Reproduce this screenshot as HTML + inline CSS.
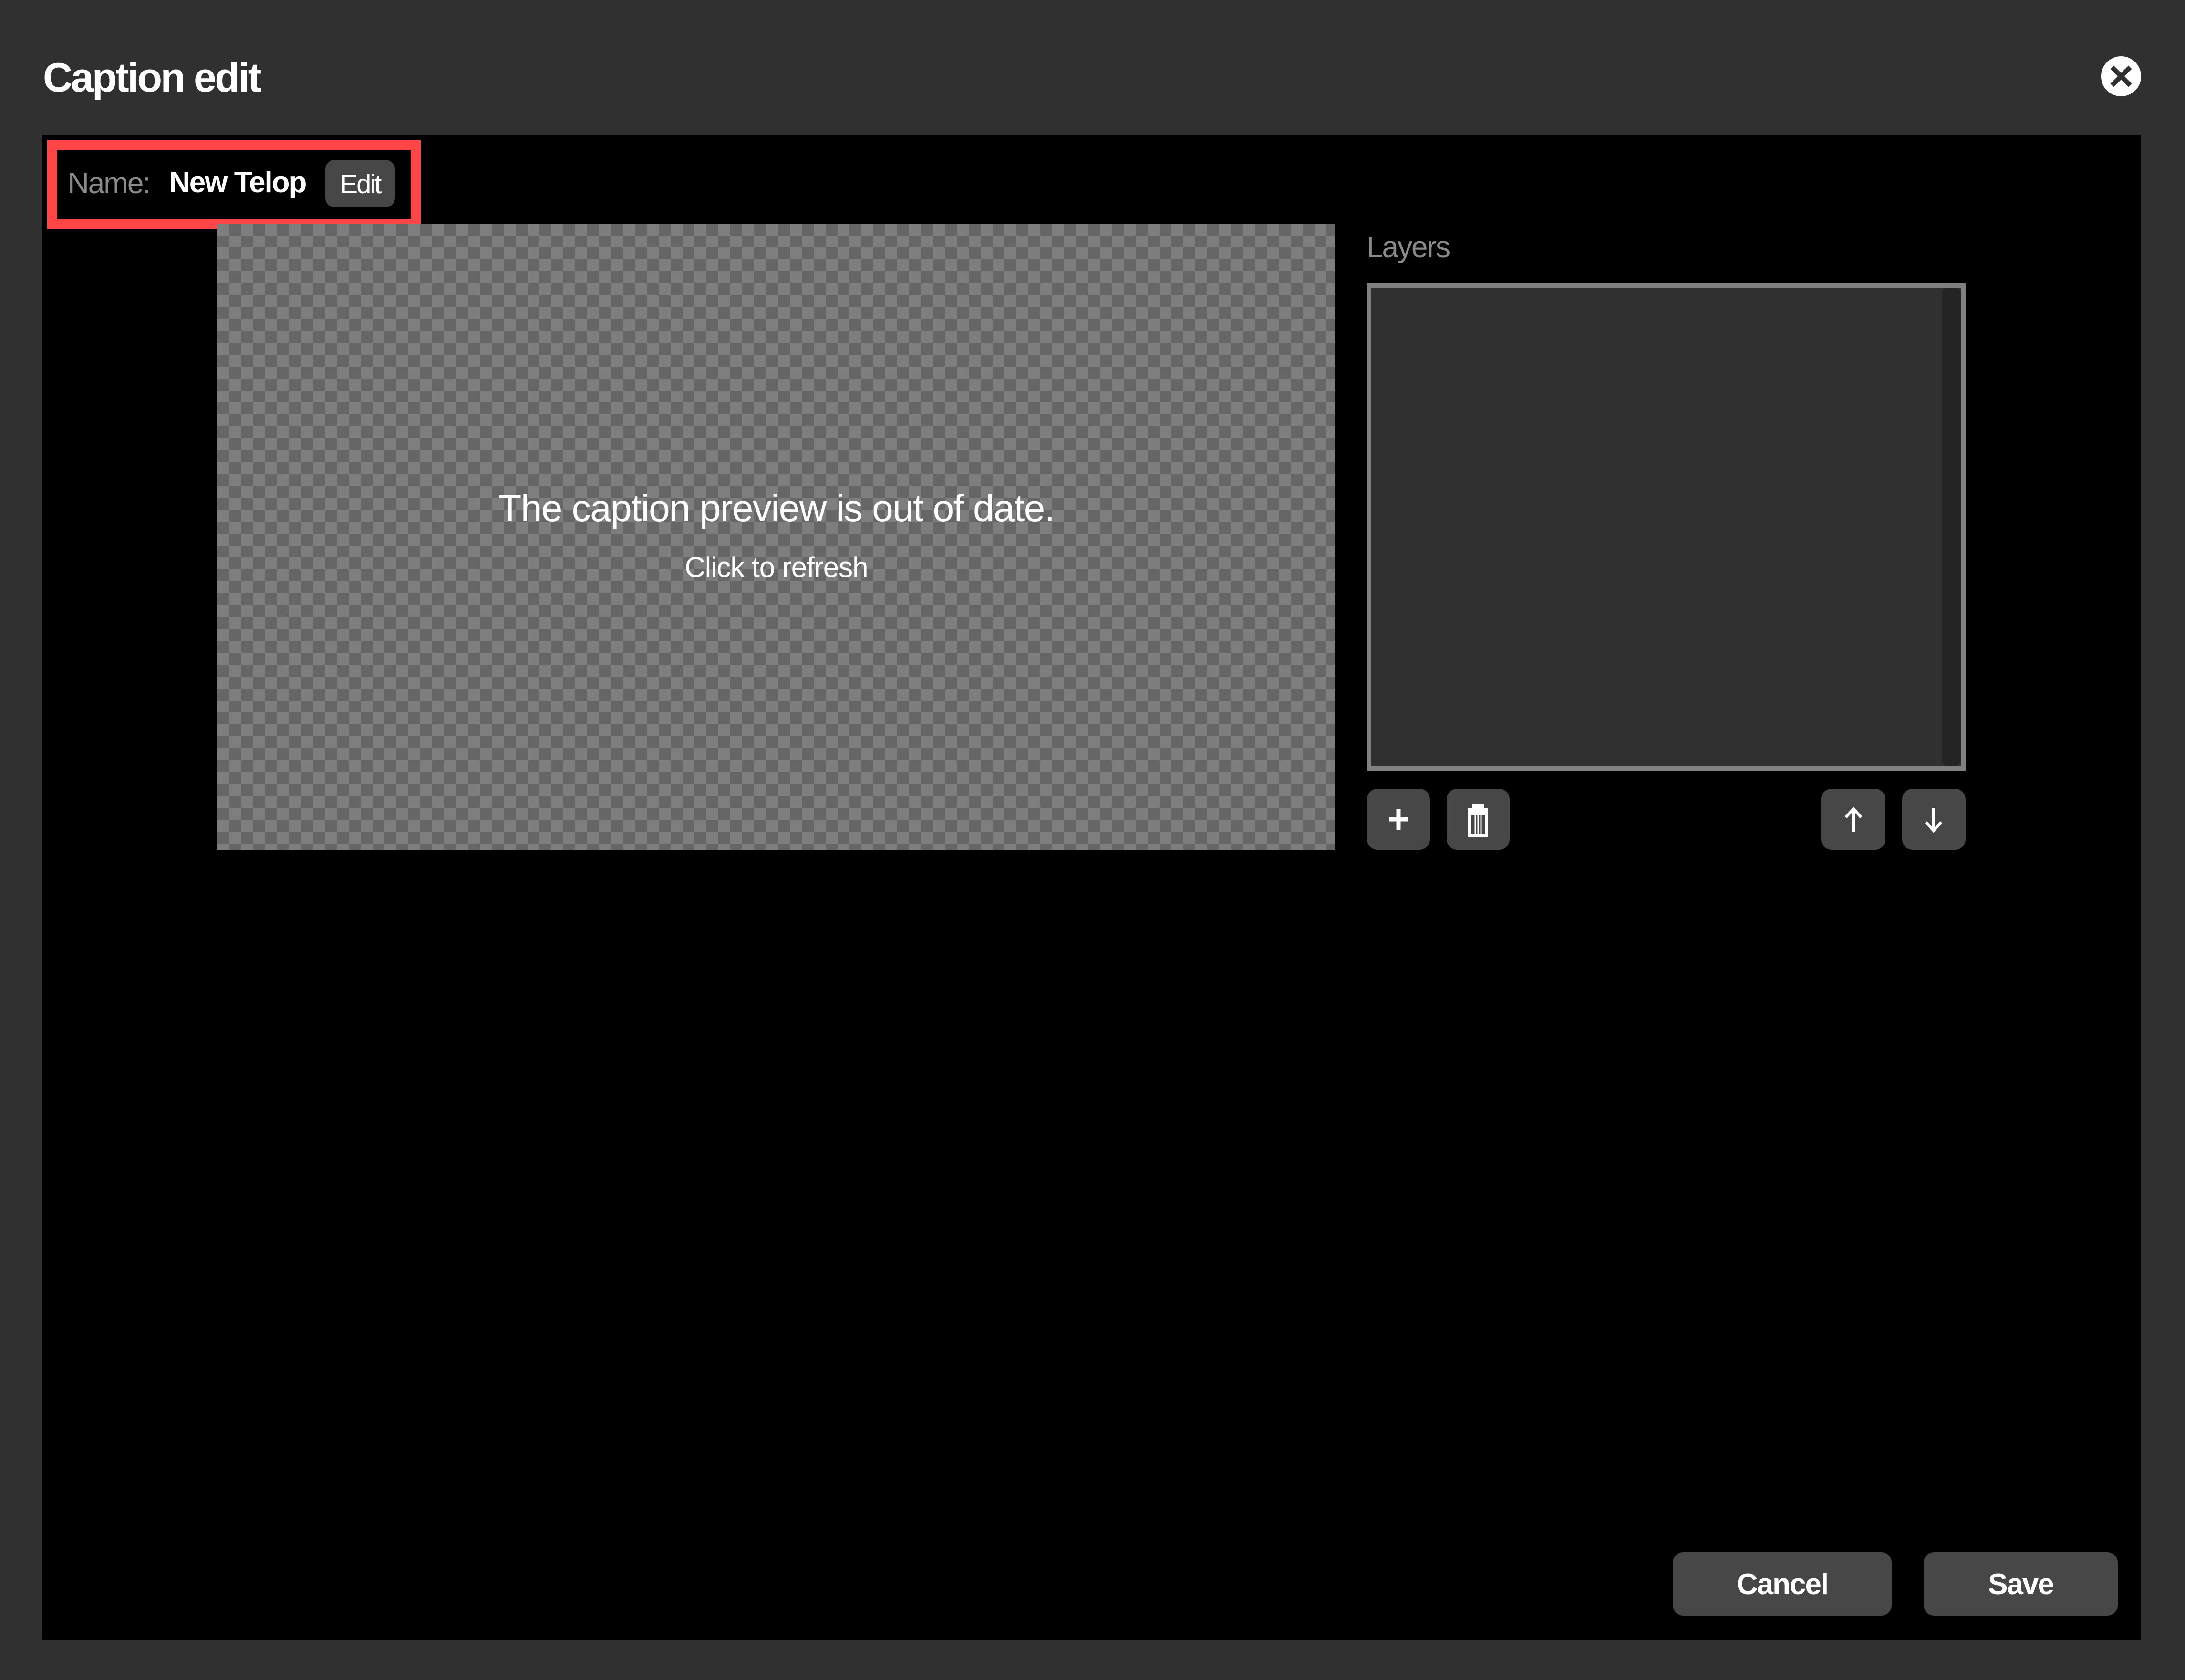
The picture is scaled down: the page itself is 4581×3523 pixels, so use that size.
<!DOCTYPE html>
<html><head><meta charset="utf-8"><style>
*{margin:0;padding:0;box-sizing:border-box}
body{width:4581px;height:3523px;background:#303030;position:relative;overflow:hidden;font-family:"Liberation Sans",sans-serif;color:#fff}
.a{position:absolute}
.btn{position:absolute;background:#474747;border-radius:22px}
.t{position:absolute;white-space:nowrap;line-height:1}
</style></head><body>
<div class="t" style="left:90px;top:120px;font-size:86px;font-weight:bold;letter-spacing:-3.5px">Caption edit</div>
<svg class="a" style="left:4403px;top:116px" width="88" height="88" viewBox="0 0 88 88"><circle cx="44" cy="44" r="42" fill="#fff"/><path d="M25 25L63 63M63 25L25 63" stroke="#303030" stroke-width="10"/></svg>
<div class="a" style="left:88px;top:283px;width:4400px;height:3156px;background:#000"></div>
<div class="a" style="left:99px;top:293px;width:783px;height:187px;border:21px solid #ff4545"></div>
<div class="t" style="left:142px;top:354px;font-size:62px;color:#8a8a8a;letter-spacing:-2px">Name:</div>
<div class="t" style="left:354px;top:352px;font-size:62px;font-weight:bold;letter-spacing:-2px">New Telop</div>
<div class="btn" style="left:682px;top:335px;width:146px;height:100px;border-radius:20px"></div>
<div class="t" style="left:682px;top:358px;width:146px;text-align:center;font-size:56px;letter-spacing:-3px">Edit</div>
<div class="a" style="left:456px;top:469px;width:2343px;height:1313px;background-color:#7e7e7e;background-image:linear-gradient(45deg,#666 25%,transparent 25%,transparent 75%,#666 75%),linear-gradient(45deg,#666 25%,transparent 25%,transparent 75%,#666 75%);background-size:50px 50px;background-position:0 0,25px 25px"></div>
<div class="t" style="left:456px;top:1026px;width:2343px;text-align:center;font-size:80px;letter-spacing:-1.5px">The caption preview is out of date.</div>
<div class="t" style="left:456px;top:1160px;width:2343px;text-align:center;font-size:60px;letter-spacing:-1px">Click to refresh</div>
<div class="t" style="left:2865px;top:488px;font-size:62px;color:#8a8a8a;letter-spacing:-2px">Layers</div>
<div class="a" style="left:2865px;top:594px;width:1256px;height:1022px;border:9px solid #808080;background:#303030"></div>
<div class="a" style="left:4071px;top:603px;width:40px;height:1004px;background:#242424;border-radius:14px"></div>
<div class="btn" style="left:2866px;top:1654px;width:132px;height:128px"></div>
<div class="btn" style="left:3033px;top:1654px;width:132px;height:128px"></div>
<div class="btn" style="left:3818px;top:1654px;width:135px;height:128px"></div>
<div class="btn" style="left:3988px;top:1654px;width:133px;height:128px"></div>
<svg class="a" style="left:2866px;top:1654px" width="132" height="128"><path d="M66 42V86M46 64H86" stroke="#fff" stroke-width="9"/></svg>
<svg class="a" style="left:3033px;top:1654px" width="132" height="128"><rect x="54" y="33" width="24" height="8" fill="#fff"/><rect x="45" y="40" width="42" height="9" fill="#fff"/><rect x="48" y="52" width="36" height="46" fill="none" stroke="#fff" stroke-width="6"/><path d="M60 56V94M66 56V94M72 56V94" stroke="#fff" stroke-width="3"/></svg>
<svg class="a" style="left:3818px;top:1654px" width="135" height="128"><path d="M68 42V90M52 60L68 42L84 60" stroke="#fff" stroke-width="6" fill="none"/></svg>
<svg class="a" style="left:3988px;top:1654px" width="133" height="128"><path d="M66 40V88M50 70L66 88L82 70" stroke="#fff" stroke-width="6" fill="none"/></svg>
<div class="btn" style="left:3507px;top:3255px;width:459px;height:133px"></div>
<div class="btn" style="left:4033px;top:3255px;width:407px;height:133px"></div>
<div class="t" style="left:3507px;top:3292px;width:459px;text-align:center;font-size:62px;font-weight:bold;letter-spacing:-2px">Cancel</div>
<div class="t" style="left:4033px;top:3292px;width:407px;text-align:center;font-size:62px;font-weight:bold;letter-spacing:-2px">Save</div>
</body></html>
